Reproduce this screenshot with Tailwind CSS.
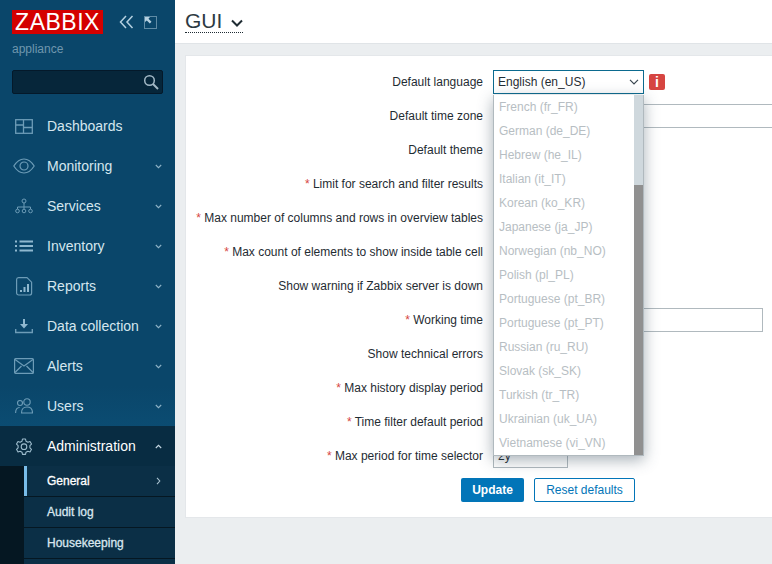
<!DOCTYPE html>
<html lang="en">
<head>
<meta charset="UTF-8">
<title>GUI</title>
<script src="https://cdn.jsdelivr.net/npm/@tailwindcss/browser@4"></script>
</head>
<body class="overflow-hidden">
<div class="flex w-[772px] h-[564px] overflow-hidden bg-[#ebeef0] font-['Liberation_Sans',Arial,sans-serif] text-[12px] text-[#1f2c33]">

  <!-- sidebar -->
  <aside class="w-[175px] h-full shrink-0 bg-[#0a466a] flex flex-col">
    <div class="h-[70px] shrink-0 pl-[12px] pt-[10px]">
      <div class="flex items-center">
        <div class="w-[91px] h-[24px] bg-[#d40000] text-white text-[23px] leading-[24px] text-center tracking-[0.5px]">ZABBIX</div>
        <svg class="ml-[16px]" width="15" height="14" viewBox="0 0 15 14" fill="none" stroke="#b5d0e0" stroke-width="1.500"><path d="M7 1 1.500 7 7 13M13.500 1 8 7l5.500 6"/></svg>
        <svg class="ml-[10px]" width="13" height="13" viewBox="0 0 13 13" fill="none" stroke="#b5d0e0" stroke-width="1"><rect x=".5" y=".5" width="12" height="12" stroke-dasharray="1 1"/><path d="M1 1h5L4.500 2.800 7.500 5.800 5.800 7.500 2.800 4.500 1 6z" fill="#b5d0e0" stroke="none"/></svg>
      </div>
      <div class="mt-[8px] text-[12px] leading-[14px] text-[#6f97ae]">appliance</div>
    </div>
    <div class="mx-[12px] h-[24px] shrink-0 rounded-[2px] bg-[#06263a] border border-[#04192a] flex items-center justify-end pr-[3px]">
      <svg width="16" height="16" viewBox="0 0 16 16" fill="none" stroke="#a3b9c6" stroke-width="1.500"><circle cx="6.500" cy="6.500" r="4.800"/><path d="m10 10 5 5" stroke-width="2"/></svg>
    </div>

    <nav class="mt-[12px] flex flex-col text-[14px] text-[#d5e6ef]">
      <a class="h-[40px] flex items-center pl-[15px] pr-[13px]">
        <svg width="18" height="15" viewBox="0 0 18 15" fill="none" stroke="#6d9cb7" stroke-width="1.300"><rect x=".7" y=".7" width="16.600" height="13.600"/><path d="M8.500 .7v13.600M8.500 8.500h8.800M.7 6H8.500"/></svg>
        <span class="ml-[14px] flex-1">Dashboards</span>
      </a>
      <a class="h-[40px] flex items-center pl-[13px] pr-[13px]">
        <svg width="22" height="16" viewBox="0 0 22 16" fill="none" stroke="#6d9cb7" stroke-width="1.200"><path d="M.8 8C4 3 7.500 1 11 1s7 2 10.200 7C18 13 14.500 15 11 15S4 13 .8 8z"/><circle cx="11" cy="8" r="4"/></svg>
        <span class="ml-[12px] flex-1">Monitoring</span>
        <svg width="7" height="5" viewBox="0 0 7 5" fill="none" stroke="#8fb3c7" stroke-width="1.100"><path d="m.8 1 2.700 2.700L6.200 1"/></svg>
      </a>
      <a class="h-[40px] flex items-center pl-[15px] pr-[13px]">
        <svg width="18" height="16" viewBox="0 0 18 16" fill="none" stroke="#6d9cb7" stroke-width="1"><circle cx="9" cy="3" r="2"/><path d="M9 5v4M2.500 11V9h13v2M9 9v2"/><circle cx="2.500" cy="13" r="1.800"/><circle cx="9" cy="13" r="1.800"/><circle cx="15.500" cy="13" r="1.800"/></svg>
        <span class="ml-[14px] flex-1">Services</span>
        <svg width="7" height="5" viewBox="0 0 7 5" fill="none" stroke="#8fb3c7" stroke-width="1.100"><path d="m.8 1 2.700 2.700L6.200 1"/></svg>
      </a>
      <a class="h-[40px] flex items-center pl-[15px] pr-[13px]">
        <svg width="18" height="12" viewBox="0 0 18 12" fill="none" stroke="#8fb8cf" stroke-width="1.800"><path d="M0 1.500h2M4.500 1.500H18M0 6h2M4.500 6H18M0 10.500h2M4.500 10.500H18"/></svg>
        <span class="ml-[14px] flex-1">Inventory</span>
        <svg width="7" height="5" viewBox="0 0 7 5" fill="none" stroke="#8fb3c7" stroke-width="1.100"><path d="m.8 1 2.700 2.700L6.200 1"/></svg>
      </a>
      <a class="h-[40px] flex items-center pl-[16px] pr-[13px]">
        <svg width="17" height="19" viewBox="0 0 17 19" fill="none" stroke="#6d9cb7" stroke-width="1.200"><path d="M2.500 .6H11l4.600 4.600V16a2 2 0 0 1-2 2h-11a2 2 0 0 1-2-2V2.500A2 2 0 0 1 2.500 .6z"/><path d="M5 15v-2M8.500 15V10M12 15V7" stroke="#8fb8cf" stroke-width="2"/></svg>
        <span class="ml-[14px] flex-1">Reports</span>
        <svg width="7" height="5" viewBox="0 0 7 5" fill="none" stroke="#8fb3c7" stroke-width="1.100"><path d="m.8 1 2.700 2.700L6.200 1"/></svg>
      </a>
      <a class="h-[40px] flex items-center pl-[15px] pr-[13px]">
        <svg width="18" height="15" viewBox="0 0 18 15" fill="none" stroke="#8fb8cf" stroke-width="1.400"><path d="M9 0v6" stroke-width="2"/><path d="M5 5h8L9 9.500z" fill="#8fb8cf" stroke="none"/><path d="M.7 10v3.500h16.600V10" stroke="#6d9cb7"/></svg>
        <span class="ml-[14px] flex-1">Data collection</span>
        <svg width="7" height="5" viewBox="0 0 7 5" fill="none" stroke="#8fb3c7" stroke-width="1.100"><path d="m.8 1 2.700 2.700L6.200 1"/></svg>
      </a>
      <a class="h-[40px] flex items-center pl-[14px] pr-[13px]">
        <svg width="20" height="16" viewBox="0 0 20 16" fill="none" stroke="#6d9cb7" stroke-width="1.200"><rect x=".6" y=".6" width="18.800" height="14.800" rx="1"/><path d="m1 1.500 9 6.500 9-6.500M1 14.500l6.500-6.500M19 14.500 12.500 8"/></svg>
        <span class="ml-[13px] flex-1">Alerts</span>
        <svg width="7" height="5" viewBox="0 0 7 5" fill="none" stroke="#8fb3c7" stroke-width="1.100"><path d="m.8 1 2.700 2.700L6.200 1"/></svg>
      </a>
      <a class="h-[40px] flex items-center pl-[15px] pr-[13px] bg-linear-to-b from-[#0a466a] to-[#0b4c72]">
        <svg width="18" height="16" viewBox="0 0 18 16" fill="none" stroke="#6d9cb7" stroke-width="1.100"><circle cx="12" cy="4" r="3.200"/><circle cx="5" cy="5" r="2.500"/><path d="M6.500 15c0-4 2-6 5.500-6s5.500 2 5.500 6zM.6 15c0-3.500 1.500-5.500 4-5.500"/></svg>
        <span class="ml-[14px] flex-1">Users</span>
        <svg width="7" height="5" viewBox="0 0 7 5" fill="none" stroke="#8fb3c7" stroke-width="1.100"><path d="m.8 1 2.700 2.700L6.200 1"/></svg>
      </a>
      <a class="h-[40px] flex items-center pl-[16px] pr-[13px] bg-[#082c42] text-white">
        <svg width="16" height="17" viewBox="0 0 16 17" fill="none" stroke="#9dbccd" stroke-width="1.100" stroke-linejoin="round"><path d="M6.500 1h3l.5 2.200 1.900 1 2.100-.7 1.500 2.600-1.600 1.500v2.200l1.600 1.500-1.500 2.600-2.100-.7-1.900 1-.5 2.200h-3L6 14.200l-1.900-1-2.100.7L.5 11.300 2.100 9.800V7.600L.5 6.100 2 3.500l2.100.7 1.900-1z"/><circle cx="8" cy="8.700" r="2.800"/></svg>
        <span class="ml-[15px] flex-1">Administration</span>
        <svg width="7" height="5" viewBox="0 0 7 5" fill="none" stroke="#c5d8e3" stroke-width="1.100"><path d="M.8 4 3.500 1.300 6.200 4"/></svg>
      </a>
    </nav>

    <div class="flex-1 flex bg-[#051722] text-[12px] text-[#d8e6ee] [-webkit-text-stroke:0.3px]">
      <div class="w-[24px] shrink-0"></div>
      <div class="flex-1 flex flex-col">
        <a class="h-[30px] shrink-0 flex items-center pl-[20px] pr-[14px] bg-[#0b2f46] border-l-[3px] border-[#79bce8] text-white">
          <span class="flex-1">General</span>
          <svg width="5" height="8" viewBox="0 0 5 8" fill="none" stroke="#a9c2d0" stroke-width="1.100"><path d="m1 .8 2.800 3.200L1 7.200"/></svg>
        </a>
        <a class="h-[31px] shrink-0 flex items-center pl-[23px] bg-[#0b2f46] border-t border-[#051722]">Audit log</a>
        <a class="h-[31px] shrink-0 flex items-center pl-[23px] bg-[#0b2f46] border-t border-[#051722]">Housekeeping</a>
        <a class="flex-1 bg-[#0b2f46] border-t border-[#051722]"></a>
      </div>
    </div>
  </aside>

  <!-- main -->
  <main class="flex-1 min-w-0 flex flex-col">
    <header class="h-[44px] shrink-0 bg-white border-b border-[#e0e4e7] pl-[10px] pt-[10px]">
      <div class="inline-flex items-center h-[23px] border-b border-dotted border-[#1f2c33] text-[21px] leading-[22px] text-[#2d3a42]">
        GUI
        <svg class="ml-[9px] mt-[3px]" width="12" height="8" viewBox="0 0 12 8" fill="none" stroke="#1f2c33" stroke-width="2"><path d="m1 1.500 5 5 5-5"/></svg>
      </div>
    </header>

    <section class="relative ml-[10px] mt-[11px] h-[463px] bg-white border border-[#e4e7ea] border-r-0 pt-[9px]">
      <div class="grid grid-cols-[297px_1fr] gap-x-[10px] auto-rows-[34px] items-center">
        <label class="text-right">Default language</label>
        <div class="flex items-center">
          <div class="w-[151px] h-[24px] border border-[#0b6a8f] flex items-center pl-[4px] pr-[4px] justify-between">
            English (en_US)
            <svg width="10" height="6" viewBox="0 0 10 6" fill="none" stroke="#3a4750" stroke-width="1.200"><path d="m1 .8 4 4 4-4"/></svg>
          </div>
          <div class="ml-[5px] w-[16px] h-[16px] rounded-[2px] bg-[#d64541] text-white text-[14px] font-bold leading-[16px] text-center">i</div>
        </div>

        <label class="text-right">Default time zone</label>
        <div class="h-[24px] -mr-[20px] border border-[#b0b9be]"></div>

        <label class="text-right">Default theme</label><div></div>
        <label class="text-right"><span class="text-[#d64541]">*</span> Limit for search and filter results</label><div></div>
        <label class="text-right"><span class="text-[#d64541]">*</span> Max number of columns and rows in overview tables</label><div></div>
        <label class="text-right"><span class="text-[#d64541]">*</span> Max count of elements to show inside table cell</label><div></div>
        <label class="text-right">Show warning if Zabbix server is down</label><div></div>

        <label class="text-right"><span class="text-[#d64541]">*</span> Working time</label>
        <div class="h-[24px] w-[270px] border border-[#b0b9be]"></div>

        <label class="text-right">Show technical errors</label><div></div>
        <label class="text-right"><span class="text-[#d64541]">*</span> Max history display period</label><div></div>
        <label class="text-right"><span class="text-[#d64541]">*</span> Time filter default period</label><div></div>

        <label class="text-right"><span class="text-[#d64541]">*</span> Max period for time selector</label>
        <div class="h-[24px] w-[75px] border border-[#b0b9be] pl-[4px] leading-[22px]">2y</div>
      </div>

      <div class="mt-[5px] ml-[275px] flex gap-[10px]">
        <button class="w-[63px] h-[24px] rounded-[2px] bg-[#0275b8] text-white font-bold">Update</button>
        <button class="w-[101px] h-[24px] rounded-[2px] border border-[#0275b8] text-[#0275b8]">Reset defaults</button>
      </div>

      <!-- open language list -->
      <div class="absolute left-[307px] top-[39px] w-[151px] h-[361px] bg-white border border-[#b0b9be] border-t-0 shadow-[0_4px_14px_rgba(60,80,95,0.45)] flex text-[#b7bec3]">
        <ul class="flex-1 pl-[5px]">
          <li class="h-[24px] leading-[24px]">French (fr_FR)</li>
          <li class="h-[24px] leading-[24px]">German (de_DE)</li>
          <li class="h-[24px] leading-[24px]">Hebrew (he_IL)</li>
          <li class="h-[24px] leading-[24px]">Italian (it_IT)</li>
          <li class="h-[24px] leading-[24px]">Korean (ko_KR)</li>
          <li class="h-[24px] leading-[24px]">Japanese (ja_JP)</li>
          <li class="h-[24px] leading-[24px]">Norwegian (nb_NO)</li>
          <li class="h-[24px] leading-[24px]">Polish (pl_PL)</li>
          <li class="h-[24px] leading-[24px]">Portuguese (pt_BR)</li>
          <li class="h-[24px] leading-[24px]">Portuguese (pt_PT)</li>
          <li class="h-[24px] leading-[24px]">Russian (ru_RU)</li>
          <li class="h-[24px] leading-[24px]">Slovak (sk_SK)</li>
          <li class="h-[24px] leading-[24px]">Turkish (tr_TR)</li>
          <li class="h-[24px] leading-[24px]">Ukrainian (uk_UA)</li>
          <li class="h-[24px] leading-[24px]">Vietnamese (vi_VN)</li>
        </ul>
        <div class="w-[9px] shrink-0 flex flex-col bg-[#cfd8dd]">
          <div class="h-[90px] shrink-0"></div>
          <div class="flex-1 bg-[#909090]"></div>
        </div>
      </div>
    </section>
  </main>
</div>
</body>
</html>
